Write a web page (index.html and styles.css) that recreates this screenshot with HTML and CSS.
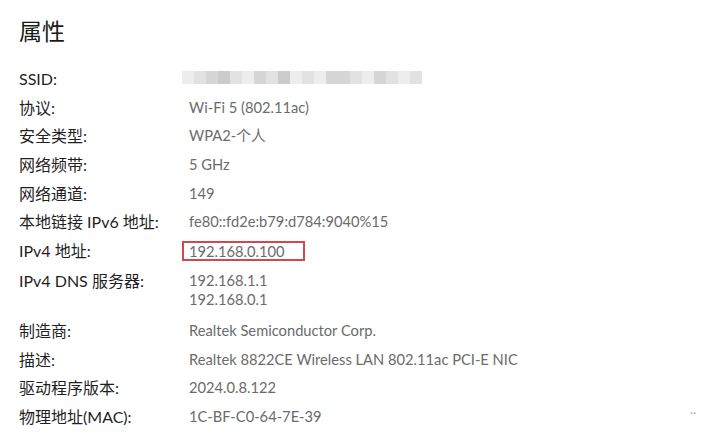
FILE: index.html
```html
<!DOCTYPE html>
<html lang="zh-CN">
<head>
<meta charset="utf-8">
<title>属性</title>
<link rel="stylesheet" href="styles.css">
</head>
<body>
<main class="page">
  <h1 class="title">属性</h1>
  <dl class="props">
    <div class="row"><dt>SSID:</dt><dd><div class="blur"><span class="b1"></span><span class="b2"></span><span class="b3"></span><span class="b4"></span><span class="b2"></span><span class="b1"></span><span class="b3"></span><span class="b2"></span><span class="b4"></span><span class="b1"></span><span class="b2"></span><span class="b1"></span><span class="b3"></span><span class="b3"></span><span class="b2"></span><span class="b1"></span><span class="b3"></span><span class="b2"></span><span class="b1"></span><span class="b2"></span></div></dd></div>
    <div class="row"><dt>协议:</dt><dd>Wi-Fi 5 (802.11ac)</dd></div>
    <div class="row"><dt>安全类型:</dt><dd>WPA2-个人</dd></div>
    <div class="row"><dt>网络频带:</dt><dd>5 GHz</dd></div>
    <div class="row"><dt>网络通道:</dt><dd>149</dd></div>
    <div class="row"><dt>本地链接 IPv6 地址:</dt><dd>fe80::fd2e:b79:d784:9040%15</dd></div>
    <div class="row"><dt>IPv4 地址:</dt><dd><span class="highlight">192.168.0.100</span></dd></div>
    <div class="row row-multi"><dt>IPv4 DNS 服务器:</dt><dd>192.168.1.1<br>192.168.0.1</dd></div>
    <div class="row"><dt>制造商:</dt><dd>Realtek Semiconductor Corp.</dd></div>
    <div class="row"><dt>描述:</dt><dd>Realtek 8822CE Wireless LAN 802.11ac PCI-E NIC</dd></div>
    <div class="row"><dt>驱动程序版本:</dt><dd>2024.0.8.122</dd></div>
    <div class="row"><dt>物理地址(MAC):</dt><dd>1C-BF-C0-64-7E-39</dd></div>
  </dl>
  <span class="dots">··</span>
</main>
</body>
</html>
```

FILE: styles.css
```css
html, body {
  margin: 0;
  padding: 0;
  background: #ffffff;
}
body {
  font-family: Lato, "Noto Sans CJK SC", sans-serif;
  font-size: 16px;
  color: #1f1f1f;
}
.page {
  position: relative;
  width: 720px;
  height: 439px;
  padding: 14px 0 0 19px;
  box-sizing: border-box;
}
.title {
  margin: 0;
  font-family: "Noto Sans CJK SC", sans-serif;
  font-size: 23px;
  font-weight: 400;
  line-height: 32px;
  color: #1a1a1a;
}
.props {
  margin: 23px 0 0 0;
  display: flex;
  flex-direction: column;
  gap: 9.7px;
}
.row {
  display: flex;
  line-height: 19px;
}
.row-multi {
  margin-bottom: 2.5px;
}
dt {
  width: 170px;
  flex: none;
  margin: 0;
  color: #1f1f1f;
}
dd {
  margin: 0;
  font-size: 14.7px;
  color: #6b6b6b;
}
.highlight {
  display: inline-block;
  margin-left: -7px;
  padding: 0 0 0 5px;
  width: 114px;
  height: 16px;
  line-height: 16px;
  border: 2px solid #d0494b;
}
.blur {
  display: flex;
  margin-left: -7px;
  margin-top: 2px;
  height: 13px;
}
.blur span {
  width: 12px;
  height: 13px;
}
.b1 { background: #ededed; }
.b2 { background: #e2e2e2; }
.b3 { background: #d6d6d6; }
.b4 { background: #cbcbcb; }
.dots {
  position: absolute;
  left: 690px;
  top: 405px;
  color: #b0b0b0;
  font-size: 12px;
}
```
